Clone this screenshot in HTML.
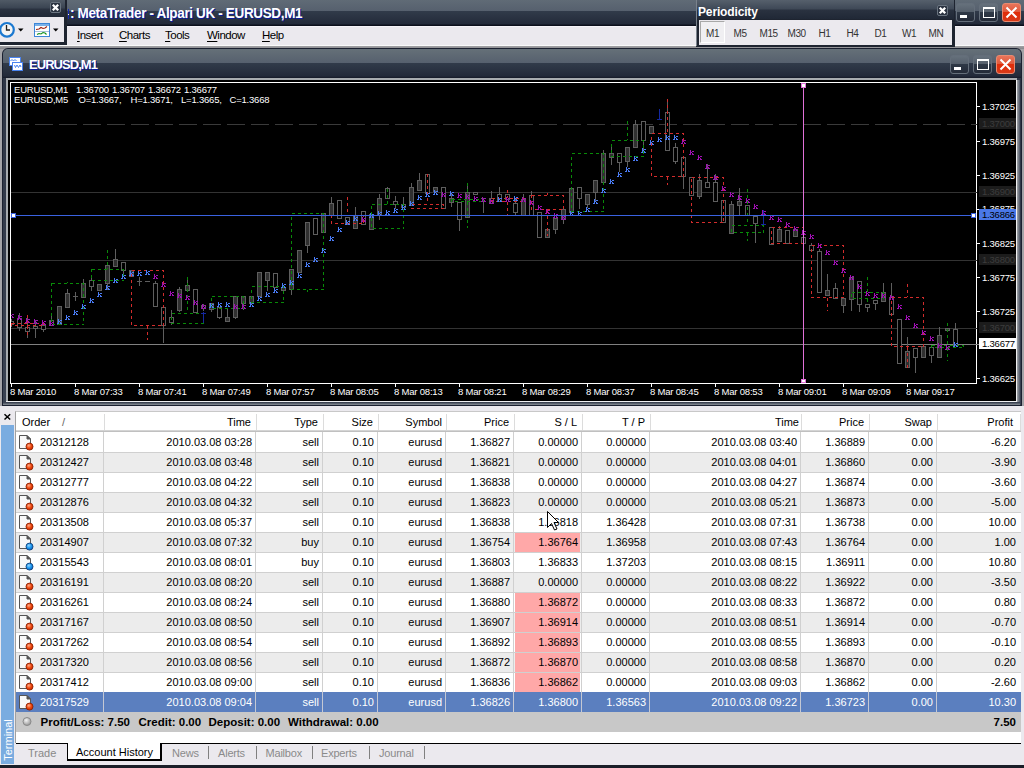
<!DOCTYPE html><html><head><meta charset="utf-8"><style>
*{margin:0;padding:0;box-sizing:border-box}
html,body{width:1024px;height:768px;overflow:hidden;background:#a4a4a8;font-family:"Liberation Sans",sans-serif;font-size:11px;color:#000;position:relative}
.a{position:absolute}
.t{position:absolute;white-space:nowrap;line-height:12px;height:12px}
.r{text-align:right}
.ttl{background:linear-gradient(#606b76 0,#56606e 11px,#313b4a 11px,#232a3a 24px,#0c101c 25px)}
.btn{position:absolute;border:1px solid #646e7a;border-radius:3px;background:linear-gradient(#66717c,#56606c 45%,#2e3846 50%,#242b38)}
.xbtn{position:absolute;border:1px solid #e88a70;border-radius:3px;background:linear-gradient(#e8745a,#e05a3c 45%,#e02c08 50%,#d83a18)}
.ch{position:absolute;font-size:9.5px;letter-spacing:-0.2px;color:#fff;white-space:nowrap;line-height:10px}
</style></head><body>

<div class="a ttl" style="left:0;top:0;width:1024px;height:26px"></div>
<div class="t" style="left:70px;top:5px;font-size:13.5px;letter-spacing:-0.35px;line-height:16px;height:16px;font-weight:bold;color:#fff;text-shadow:1px 1px 0 #0a1aa0;transform:scaleY(1.12);transform-origin:0 3px">: MetaTrader - Alpari UK - EURUSD,M1</div>
<div class="a" style="left:68px;top:9px;width:1px;height:10px;background:#1428b0"></div><div class="a" style="left:68px;top:14px;width:1px;height:1px;background:#fff"></div>
<div class="a" style="left:0;top:26px;width:1024px;height:20px;background:#ebe9ee;border-top:1px solid #f6f4f9;border-bottom:1px solid #fafafa"></div>
<div class="t" style="left:77px;top:29px;font-size:11.5px;letter-spacing:-0.5px;line-height:13px;height:13px"><u style="text-underline-offset:2px">I</u>nsert</div>
<div class="t" style="left:119px;top:29px;font-size:11.5px;letter-spacing:-0.5px;line-height:13px;height:13px"><u style="text-underline-offset:2px">C</u>harts</div>
<div class="t" style="left:165px;top:29px;font-size:11.5px;letter-spacing:-0.5px;line-height:13px;height:13px"><u style="text-underline-offset:2px">T</u>ools</div>
<div class="t" style="left:207px;top:29px;font-size:11.5px;letter-spacing:-0.5px;line-height:13px;height:13px"><u style="text-underline-offset:2px">W</u>indow</div>
<div class="t" style="left:262px;top:29px;font-size:11.5px;letter-spacing:-0.5px;line-height:13px;height:13px"><u style="text-underline-offset:2px">H</u>elp</div>
<div class="btn" style="left:956px;top:3px;width:19px;height:19px"></div>
<div class="btn" style="left:979px;top:3px;width:19px;height:19px"></div>
<div class="a" style="left:960px;top:15px;width:7px;height:3px;background:#fff"></div>
<div class="a" style="left:983px;top:7px;width:12px;height:11px;border:1px solid #fff;border-top-width:2px"></div>
<div class="xbtn" style="left:1002px;top:3px;width:19px;height:19px"></div>
<svg class="a" style="left:1002px;top:3px" width="19" height="19"><path d="M4.5 4.5L14.5 14.5M14.5 4.5L4.5 14.5" stroke="#fff" stroke-width="2"/></svg>
<div class="a" style="left:0;top:46px;width:1024px;height:3px;background:linear-gradient(#a2a2a6,#86868a)"></div>
<div class="a" style="left:0;top:0;width:67px;height:45px;background:#1e2430"></div>
<div class="a ttl" style="left:0;top:0;width:65px;height:17px;background:linear-gradient(#505a66,#3a4452 8px,#2a3240 9px,#202836)"></div>
<div class="a" style="left:0;top:17px;width:64px;height:25px;background:#ebe9ee"></div>
<div class="a" style="left:50px;top:2px;width:11px;height:11px;border:1px solid #6a7480;border-radius:2px;background:#2a3240"></div>
<svg class="a" style="left:50px;top:2px" width="11" height="11"><path d="M2.8 2.8L8.2 8.2M8.2 2.8L2.8 8.2" stroke="#fff" stroke-width="2.3"/></svg>
<svg class="a" style="left:0;top:17px" width="64" height="25"><circle cx="7" cy="12.8" r="6.8" fill="#f4f4f4" stroke="#1a78d0" stroke-width="2.2"/><path d="M6.5 8V13H10" fill="none" stroke="#222" stroke-width="1.3"/><path d="M18 11.5h5.5l-2.75 3z" fill="#000"/><rect x="34.5" y="6.5" width="15" height="13" fill="#fff" stroke="#3c86d8"/><rect x="35" y="7" width="14" height="2" fill="#7ab0e8"/><path d="M35 14.5H49" stroke="#a8c0d8"/><path d="M36 12.5l3-0.5 2-1.5 2 1 2-0.5 2-1.5" fill="none" stroke="#a02010" stroke-width="1.1"/><path d="M37 17.5l2-1 2 0.5 2-1.5 2 0.5 1.5 1.5" fill="none" stroke="#10901a" stroke-width="1.1"/><path d="M53 11.5h5.5l-2.75 3z" fill="#000"/></svg>
<div class="a" style="left:696px;top:0;width:259px;height:47px;background:#1e2430"></div>
<div class="a" style="left:697px;top:0;width:257px;height:19px;background:linear-gradient(#56606c,#3e4856 9px,#2a3240 10px,#202836)"></div>
<div class="a" style="left:696px;top:0;width:1px;height:46px;background:#7a828c"></div>
<div class="t" style="left:698px;top:5.5px;font-size:12px;letter-spacing:-0.15px;line-height:13px;height:13px;font-weight:bold;color:#fff">Periodicity</div>
<div class="a" style="left:937px;top:5px;width:11px;height:11px;border:1px solid #6a7480;border-radius:2px;background:#2a3240"></div>
<svg class="a" style="left:937px;top:5px" width="11" height="11"><path d="M2.8 2.8L8.2 8.2M8.2 2.8L2.8 8.2" stroke="#fff" stroke-width="2.3"/></svg>
<div class="a" style="left:699px;top:20px;width:253px;height:25px;background:#ebe9ee"></div>
<div class="a" style="left:700px;top:21px;width:25px;height:22px;background:#f0eff2;border:1px solid #a8a8a8;border-right-color:#fff;border-bottom-color:#fff"></div>
<div class="t" style="left:706px;top:28px;color:#333;font-size:10px;letter-spacing:-0.4px">M1</div>
<div class="t" style="left:733.5px;top:28px;color:#333;font-size:10px;letter-spacing:-0.4px">M5</div>
<div class="t" style="left:759.5px;top:28px;color:#333;font-size:10px;letter-spacing:-0.4px">M15</div>
<div class="t" style="left:787.5px;top:28px;color:#333;font-size:10px;letter-spacing:-0.4px">M30</div>
<div class="t" style="left:818.5px;top:28px;color:#333;font-size:10px;letter-spacing:-0.4px">H1</div>
<div class="t" style="left:846.5px;top:28px;color:#333;font-size:10px;letter-spacing:-0.4px">H4</div>
<div class="t" style="left:874.5px;top:28px;color:#333;font-size:10px;letter-spacing:-0.4px">D1</div>
<div class="t" style="left:902px;top:28px;color:#333;font-size:10px;letter-spacing:-0.4px">W1</div>
<div class="t" style="left:928.5px;top:28px;color:#333;font-size:10px;letter-spacing:-0.4px">MN</div>
<div class="a" style="left:2px;top:48px;width:1020px;height:358px;background:#1a2030;border-radius:6px 6px 0 0"></div>
<div class="a" style="left:3px;top:49px;width:1018px;height:356px;background:linear-gradient(#2c3444,#3a4252);border-radius:5px 5px 0 0"></div>
<div class="a ttl" style="left:3px;top:49px;width:1018px;height:29px;border-radius:5px 5px 0 0;background:linear-gradient(#657078 0,#56606e 14px,#313b4a 14px,#232a3a 27px,#151a28 29px)"></div>
<div class="a" style="left:6px;top:78px;width:1011px;height:2px;background:#a8acb0"></div>
<div class="a" style="left:6px;top:78px;width:2px;height:324px;background:#a8acb0"></div>
<div class="a" style="left:1016px;top:80px;width:1px;height:322px;background:#f0f0f2"></div>
<div class="a" style="left:6px;top:401px;width:1011px;height:1px;background:#f0f0f2"></div>
<div class="a" style="left:1017px;top:80px;width:3px;height:325px;background:linear-gradient(90deg,#a0a4a8,#505868)"></div>
<div class="a" style="left:3px;top:402px;width:1017px;height:3px;background:linear-gradient(#2a3242,#8a9098)"></div>
<div class="t" style="left:29px;top:57px;font-size:13px;letter-spacing:-0.95px;line-height:15px;height:15px;font-weight:bold;color:#fff;text-shadow:1px 1px 0 #0a1aa0">EURUSD,M1</div>
<div class="btn" style="left:950px;top:55px;width:19px;height:19px"></div>
<div class="btn" style="left:973px;top:55px;width:19px;height:19px"></div>
<div class="a" style="left:954px;top:67px;width:7px;height:3px;background:#fff"></div>
<div class="a" style="left:977px;top:59px;width:12px;height:11px;border:1px solid #fff;border-top-width:2px"></div>
<div class="xbtn" style="left:996px;top:55px;width:19px;height:19px"></div>
<svg class="a" style="left:996px;top:55px" width="19" height="19"><path d="M4.5 4.5L14.5 14.5M14.5 4.5L4.5 14.5" stroke="#fff" stroke-width="2"/></svg>
<svg class="a" style="left:8px;top:56px" width="16" height="16"><rect x="1.5" y="1.5" width="11" height="8" fill="#fff" stroke="#4a84f0"/><path d="M2.5 5l1.5-1.5 1.5 1.5 1.5-1.5 1.5 1.5" fill="none" stroke="#4a84f0"/><rect x="4.5" y="6.5" width="10" height="8" fill="#fff" stroke="#4a84f0"/><path d="M6.5 9l1 2.5 1.5-2.5 1.5 2.5 1.5-2.5 1 2" fill="none" stroke="#4a84f0"/></svg>
<div class="a" style="left:8px;top:80px;width:1008px;height:321px;background:#000"></div>
<div class="a" style="left:10px;top:82px;width:967px;height:302px;border:1px solid #fff"></div>
<div class="ch" style="left:14px;top:85px">EURUSD,M1</div>
<div class="ch" style="left:76px;top:85px">1.36700</div>
<div class="ch" style="left:112px;top:85px">1.36707</div>
<div class="ch" style="left:148px;top:85px">1.36672</div>
<div class="ch" style="left:184px;top:85px">1.36677</div>
<div class="ch" style="left:14px;top:95px">EURUSD,M5</div>
<div class="ch" style="left:78.5px;top:95px">O=1.3667,</div>
<div class="ch" style="left:130.5px;top:95px">H=1.3671,</div>
<div class="ch" style="left:181px;top:95px">L=1.3665,</div>
<div class="ch" style="left:229.5px;top:95px">C=1.3668</div>
<svg class="a" style="left:0;top:0" width="1024" height="410" shape-rendering="crispEdges">
<defs><g id="mk"><path d="M1 0h1v4h-1zM3 1h2v1h-2zM2 2h1v1h-1zM3 3h1v1h-1zM0 4h2v1h-2zM3 4h2v1h-2z"/></g><clipPath id="cc"><rect x="11" y="83" width="966" height="300"/></clipPath></defs><g clip-path="url(#cc)">
<path d="M11 124.5H977" stroke="#3a3a3a" stroke-dasharray="18 6"/>
<path d="M11 192.5H977" stroke="#333"/>
<path d="M11 260.5H977" stroke="#333"/>
<path d="M11 328.5H977" stroke="#333"/>
<path d="M11 344.5H977" stroke="#808080"/>
<path d="M11.5 319V321" stroke="#5e5e5e"/>
<path d="M11.5 325V327" stroke="#5e5e5e"/>
<rect x="9.5" y="321.5" width="4" height="3" fill="#000" stroke="#5e5e5e"/>
<path d="M19.5 313V318" stroke="#5e5e5e"/>
<path d="M19.5 328V331" stroke="#5e5e5e"/>
<rect x="17.5" y="318.5" width="4" height="9" fill="#000" stroke="#5e5e5e"/>
<path d="M27.5 315V327" stroke="#5e5e5e"/>
<path d="M27.5 332V338" stroke="#5e5e5e"/>
<rect x="25.5" y="327.5" width="4" height="4" fill="#000" stroke="#5e5e5e"/>
<path d="M35.5 320V326" stroke="#5e5e5e"/>
<path d="M35.5 329V338" stroke="#5e5e5e"/>
<rect x="33.5" y="326.5" width="4" height="2" fill="#000" stroke="#5e5e5e"/>
<path d="M43.5 323V325" stroke="#5e5e5e"/>
<path d="M43.5 330V332" stroke="#5e5e5e"/>
<rect x="41.5" y="325.5" width="4" height="4" fill="#000" stroke="#5e5e5e"/>
<path d="M51.5 314V320" stroke="#5e5e5e"/>
<rect x="49.5" y="320.5" width="4" height="5" fill="#000" stroke="#5e5e5e"/>
<rect x="57.5" y="306.5" width="4" height="18" fill="#303030" stroke="#5e5e5e"/>
<path d="M67.5 289V293" stroke="#5e5e5e"/>
<rect x="65.5" y="293.5" width="4" height="14" fill="#303030" stroke="#5e5e5e"/>
<path d="M75.5 292V296" stroke="#5e5e5e"/>
<path d="M75.5 297V301" stroke="#5e5e5e"/>
<path d="M73 296.5H78" stroke="#5e5e5e"/>
<path d="M83.5 279V283" stroke="#5e5e5e"/>
<rect x="81.5" y="283.5" width="4" height="14" fill="#303030" stroke="#5e5e5e"/>
<path d="M91.5 276V280" stroke="#5e5e5e"/>
<path d="M91.5 287V291" stroke="#5e5e5e"/>
<rect x="89.5" y="280.5" width="4" height="6" fill="#000" stroke="#5e5e5e"/>
<rect x="97.5" y="284.5" width="4" height="6" fill="#303030" stroke="#5e5e5e"/>
<path d="M107.5 284V290" stroke="#5e5e5e"/>
<rect x="105.5" y="265.5" width="4" height="18" fill="#303030" stroke="#5e5e5e"/>
<path d="M115.5 249V259" stroke="#5e5e5e"/>
<rect x="113.5" y="259.5" width="4" height="7" fill="#303030" stroke="#5e5e5e"/>
<path d="M123.5 271V275" stroke="#5e5e5e"/>
<rect x="121.5" y="262.5" width="4" height="8" fill="#000" stroke="#5e5e5e"/>
<rect x="129.5" y="270.5" width="4" height="6" fill="#303030" stroke="#5e5e5e"/>
<path d="M139.5 277V281" stroke="#5e5e5e"/>
<path d="M139.5 282V286" stroke="#5e5e5e"/>
<path d="M137 281.5H142" stroke="#5e5e5e"/>
<path d="M145 281.5H150" stroke="#5e5e5e"/>
<path d="M155.5 281V283" stroke="#5e5e5e"/>
<rect x="153.5" y="283.5" width="4" height="23" fill="#000" stroke="#5e5e5e"/>
<path d="M163.5 326V343" stroke="#5e5e5e"/>
<rect x="161.5" y="307.5" width="4" height="18" fill="#000" stroke="#5e5e5e"/>
<path d="M171.5 310V317" stroke="#5e5e5e"/>
<path d="M171.5 323V325" stroke="#5e5e5e"/>
<rect x="169.5" y="317.5" width="4" height="5" fill="#000" stroke="#5e5e5e"/>
<path d="M179.5 287V289" stroke="#5e5e5e"/>
<path d="M179.5 311V312" stroke="#5e5e5e"/>
<rect x="177.5" y="289.5" width="4" height="21" fill="#303030" stroke="#5e5e5e"/>
<path d="M187.5 277V285" stroke="#5e5e5e"/>
<rect x="185.5" y="285.5" width="4" height="5" fill="#303030" stroke="#5e5e5e"/>
<rect x="193.5" y="289.5" width="4" height="23" fill="#000" stroke="#5e5e5e"/>
<path d="M203.5 304V305" stroke="#5e5e5e"/>
<path d="M203.5 309V311" stroke="#5e5e5e"/>
<rect x="201.5" y="305.5" width="4" height="3" fill="#000" stroke="#5e5e5e"/>
<path d="M211.5 310V312" stroke="#5e5e5e"/>
<rect x="209.5" y="303.5" width="4" height="6" fill="#303030" stroke="#5e5e5e"/>
<path d="M219.5 318V319" stroke="#5e5e5e"/>
<rect x="217.5" y="307.5" width="4" height="10" fill="#000" stroke="#5e5e5e"/>
<path d="M227.5 309V317" stroke="#5e5e5e"/>
<rect x="225.5" y="317.5" width="4" height="4" fill="#303030" stroke="#5e5e5e"/>
<path d="M235.5 318V319" stroke="#5e5e5e"/>
<rect x="233.5" y="296.5" width="4" height="21" fill="#303030" stroke="#5e5e5e"/>
<path d="M243.5 304V310" stroke="#5e5e5e"/>
<rect x="241.5" y="296.5" width="4" height="7" fill="#303030" stroke="#5e5e5e"/>
<rect x="249.5" y="296.5" width="4" height="7" fill="#303030" stroke="#5e5e5e"/>
<rect x="257.5" y="272.5" width="4" height="24" fill="#303030" stroke="#5e5e5e"/>
<path d="M267.5 281V291" stroke="#5e5e5e"/>
<rect x="265.5" y="272.5" width="4" height="8" fill="#303030" stroke="#5e5e5e"/>
<rect x="273.5" y="273.5" width="4" height="14" fill="#000" stroke="#5e5e5e"/>
<rect x="281.5" y="287.5" width="4" height="3" fill="#303030" stroke="#5e5e5e"/>
<path d="M291.5 290V295" stroke="#5e5e5e"/>
<rect x="289.5" y="269.5" width="4" height="20" fill="#303030" stroke="#5e5e5e"/>
<rect x="297.5" y="250.5" width="4" height="22" fill="#303030" stroke="#5e5e5e"/>
<path d="M307.5 246V253" stroke="#5e5e5e"/>
<rect x="305.5" y="222.5" width="4" height="23" fill="#303030" stroke="#5e5e5e"/>
<rect x="313.5" y="218.5" width="4" height="16" fill="#000" stroke="#5e5e5e"/>
<rect x="321.5" y="213.5" width="4" height="19" fill="#303030" stroke="#5e5e5e"/>
<path d="M331.5 197V203" stroke="#5e5e5e"/>
<rect x="329.5" y="203.5" width="4" height="12" fill="#303030" stroke="#5e5e5e"/>
<rect x="337.5" y="200.5" width="4" height="18" fill="#000" stroke="#5e5e5e"/>
<rect x="345.5" y="217.5" width="4" height="7" fill="#000" stroke="#5e5e5e"/>
<path d="M355.5 207V215" stroke="#5e5e5e"/>
<rect x="353.5" y="215.5" width="4" height="13" fill="#303030" stroke="#5e5e5e"/>
<rect x="361.5" y="211.5" width="4" height="13" fill="#000" stroke="#5e5e5e"/>
<rect x="369.5" y="214.5" width="4" height="15" fill="#303030" stroke="#5e5e5e"/>
<path d="M379.5 194V198" stroke="#5e5e5e"/>
<path d="M379.5 216V220" stroke="#5e5e5e"/>
<rect x="377.5" y="198.5" width="4" height="17" fill="#303030" stroke="#5e5e5e"/>
<path d="M387.5 187V188" stroke="#5e5e5e"/>
<rect x="385.5" y="188.5" width="4" height="10" fill="#000" stroke="#5e5e5e"/>
<path d="M395.5 196V201" stroke="#5e5e5e"/>
<path d="M395.5 205V209" stroke="#5e5e5e"/>
<rect x="393.5" y="201.5" width="4" height="3" fill="#000" stroke="#5e5e5e"/>
<path d="M403.5 197V204" stroke="#5e5e5e"/>
<rect x="401.5" y="204.5" width="4" height="3" fill="#000" stroke="#5e5e5e"/>
<path d="M411.5 183V187" stroke="#5e5e5e"/>
<rect x="409.5" y="187.5" width="4" height="18" fill="#303030" stroke="#5e5e5e"/>
<path d="M419.5 173V180" stroke="#5e5e5e"/>
<rect x="417.5" y="180.5" width="4" height="10" fill="#303030" stroke="#5e5e5e"/>
<rect x="425.5" y="174.5" width="4" height="19" fill="#000" stroke="#5e5e5e"/>
<rect x="433.5" y="187.5" width="4" height="4" fill="#303030" stroke="#5e5e5e"/>
<rect x="441.5" y="187.5" width="4" height="21" fill="#000" stroke="#5e5e5e"/>
<path d="M451.5 193V198" stroke="#5e5e5e"/>
<path d="M451.5 203V207" stroke="#5e5e5e"/>
<rect x="449.5" y="198.5" width="4" height="4" fill="#303030" stroke="#5e5e5e"/>
<path d="M459.5 220V231" stroke="#5e5e5e"/>
<rect x="457.5" y="202.5" width="4" height="17" fill="#000" stroke="#5e5e5e"/>
<path d="M467.5 183V192" stroke="#5e5e5e"/>
<rect x="465.5" y="192.5" width="4" height="25" fill="#303030" stroke="#5e5e5e"/>
<rect x="473.5" y="192.5" width="4" height="2" fill="#000" stroke="#5e5e5e"/>
<path d="M483.5 200V213" stroke="#5e5e5e"/>
<path d="M481 198.5H486" stroke="#5e5e5e"/>
<path d="M491.5 191V198" stroke="#5e5e5e"/>
<rect x="489.5" y="198.5" width="4" height="5" fill="#000" stroke="#5e5e5e"/>
<path d="M499.5 187V194" stroke="#5e5e5e"/>
<rect x="497.5" y="194.5" width="4" height="7" fill="#000" stroke="#5e5e5e"/>
<rect x="505.5" y="194.5" width="4" height="5" fill="#000" stroke="#5e5e5e"/>
<path d="M515.5 199V203" stroke="#5e5e5e"/>
<path d="M515.5 213V216" stroke="#5e5e5e"/>
<rect x="513.5" y="203.5" width="4" height="9" fill="#000" stroke="#5e5e5e"/>
<path d="M523.5 194V199" stroke="#5e5e5e"/>
<rect x="521.5" y="199.5" width="4" height="16" fill="#303030" stroke="#5e5e5e"/>
<path d="M531.5 191V195" stroke="#5e5e5e"/>
<rect x="529.5" y="195.5" width="4" height="20" fill="#000" stroke="#5e5e5e"/>
<rect x="537.5" y="212.5" width="4" height="25" fill="#000" stroke="#5e5e5e"/>
<rect x="545.5" y="229.5" width="4" height="8" fill="#303030" stroke="#5e5e5e"/>
<path d="M555.5 230V234" stroke="#5e5e5e"/>
<rect x="553.5" y="218.5" width="4" height="11" fill="#303030" stroke="#5e5e5e"/>
<path d="M563.5 220V224" stroke="#5e5e5e"/>
<rect x="561.5" y="209.5" width="4" height="10" fill="#303030" stroke="#5e5e5e"/>
<rect x="569.5" y="188.5" width="4" height="24" fill="#303030" stroke="#5e5e5e"/>
<path d="M579.5 199V209" stroke="#5e5e5e"/>
<rect x="577.5" y="187.5" width="4" height="11" fill="#000" stroke="#5e5e5e"/>
<path d="M587.5 205V208" stroke="#5e5e5e"/>
<rect x="585.5" y="194.5" width="4" height="10" fill="#303030" stroke="#5e5e5e"/>
<path d="M595.5 193V201" stroke="#5e5e5e"/>
<rect x="593.5" y="180.5" width="4" height="12" fill="#303030" stroke="#5e5e5e"/>
<path d="M603.5 150V153" stroke="#5e5e5e"/>
<rect x="601.5" y="153.5" width="4" height="29" fill="#303030" stroke="#5e5e5e"/>
<path d="M611.5 144V153" stroke="#5e5e5e"/>
<path d="M611.5 158V165" stroke="#5e5e5e"/>
<rect x="609.5" y="153.5" width="4" height="4" fill="#303030" stroke="#5e5e5e"/>
<path d="M619.5 163V172" stroke="#5e5e5e"/>
<rect x="617.5" y="153.5" width="4" height="9" fill="#000" stroke="#5e5e5e"/>
<path d="M627.5 162V167" stroke="#5e5e5e"/>
<rect x="625.5" y="147.5" width="4" height="14" fill="#303030" stroke="#5e5e5e"/>
<path d="M635.5 120V124" stroke="#5e5e5e"/>
<rect x="633.5" y="124.5" width="4" height="23" fill="#303030" stroke="#5e5e5e"/>
<path d="M643.5 141V153" stroke="#5e5e5e"/>
<rect x="641.5" y="121.5" width="4" height="19" fill="#000" stroke="#5e5e5e"/>
<rect x="649.5" y="126.5" width="4" height="7" fill="#303030" stroke="#5e5e5e"/>
<path d="M667.5 99V112" stroke="#5e5e5e"/>
<rect x="665.5" y="112.5" width="4" height="38" fill="#000" stroke="#5e5e5e"/>
<path d="M675.5 143V147" stroke="#5e5e5e"/>
<path d="M675.5 162V164" stroke="#5e5e5e"/>
<rect x="673.5" y="147.5" width="4" height="14" fill="#000" stroke="#5e5e5e"/>
<path d="M683.5 177V189" stroke="#5e5e5e"/>
<rect x="681.5" y="157.5" width="4" height="19" fill="#000" stroke="#5e5e5e"/>
<rect x="689.5" y="177.5" width="4" height="18" fill="#000" stroke="#5e5e5e"/>
<path d="M699.5 174V180" stroke="#5e5e5e"/>
<path d="M699.5 197V199" stroke="#5e5e5e"/>
<rect x="697.5" y="180.5" width="4" height="16" fill="#303030" stroke="#5e5e5e"/>
<path d="M707.5 164V182" stroke="#5e5e5e"/>
<rect x="705.5" y="182.5" width="4" height="5" fill="#000" stroke="#5e5e5e"/>
<path d="M715.5 174V182" stroke="#5e5e5e"/>
<rect x="713.5" y="182.5" width="4" height="19" fill="#000" stroke="#5e5e5e"/>
<rect x="721.5" y="200.5" width="4" height="22" fill="#000" stroke="#5e5e5e"/>
<path d="M731.5 201V204" stroke="#5e5e5e"/>
<rect x="729.5" y="204.5" width="4" height="29" fill="#303030" stroke="#5e5e5e"/>
<path d="M739.5 188V201" stroke="#5e5e5e"/>
<path d="M739.5 206V216" stroke="#5e5e5e"/>
<rect x="737.5" y="201.5" width="4" height="4" fill="#303030" stroke="#5e5e5e"/>
<rect x="745.5" y="205.5" width="4" height="10" fill="#000" stroke="#5e5e5e"/>
<path d="M755.5 224V243" stroke="#5e5e5e"/>
<rect x="753.5" y="216.5" width="4" height="7" fill="#000" stroke="#5e5e5e"/>
<rect x="769.5" y="227.5" width="4" height="17" fill="#000" stroke="#5e5e5e"/>
<path d="M779.5 226V229" stroke="#5e5e5e"/>
<rect x="777.5" y="229.5" width="4" height="12" fill="#303030" stroke="#5e5e5e"/>
<rect x="785.5" y="230.5" width="4" height="13" fill="#000" stroke="#5e5e5e"/>
<rect x="793.5" y="229.5" width="4" height="7" fill="#303030" stroke="#5e5e5e"/>
<rect x="801.5" y="237.5" width="4" height="6" fill="#000" stroke="#5e5e5e"/>
<path d="M811.5 243V245" stroke="#5e5e5e"/>
<rect x="809.5" y="245.5" width="4" height="5" fill="#000" stroke="#5e5e5e"/>
<path d="M819.5 249V251" stroke="#5e5e5e"/>
<rect x="817.5" y="251.5" width="4" height="41" fill="#000" stroke="#5e5e5e"/>
<path d="M827.5 274V290" stroke="#5e5e5e"/>
<rect x="825.5" y="290.5" width="4" height="5" fill="#303030" stroke="#5e5e5e"/>
<path d="M835.5 283V288" stroke="#5e5e5e"/>
<rect x="833.5" y="288.5" width="4" height="10" fill="#000" stroke="#5e5e5e"/>
<path d="M843.5 306V313" stroke="#5e5e5e"/>
<rect x="841.5" y="298.5" width="4" height="7" fill="#303030" stroke="#5e5e5e"/>
<path d="M851.5 300V311" stroke="#5e5e5e"/>
<rect x="849.5" y="277.5" width="4" height="22" fill="#303030" stroke="#5e5e5e"/>
<path d="M859.5 305V312" stroke="#5e5e5e"/>
<rect x="857.5" y="281.5" width="4" height="23" fill="#000" stroke="#5e5e5e"/>
<path d="M867.5 308V312" stroke="#5e5e5e"/>
<rect x="865.5" y="304.5" width="4" height="3" fill="#000" stroke="#5e5e5e"/>
<path d="M875.5 304V310" stroke="#5e5e5e"/>
<rect x="873.5" y="300.5" width="4" height="3" fill="#000" stroke="#5e5e5e"/>
<path d="M883.5 283V292" stroke="#5e5e5e"/>
<rect x="881.5" y="292.5" width="4" height="9" fill="#303030" stroke="#5e5e5e"/>
<path d="M891.5 283V297" stroke="#5e5e5e"/>
<rect x="889.5" y="297.5" width="4" height="17" fill="#000" stroke="#5e5e5e"/>
<rect x="897.5" y="319.5" width="4" height="44" fill="#000" stroke="#5e5e5e"/>
<path d="M907.5 337V351" stroke="#5e5e5e"/>
<rect x="905.5" y="351.5" width="4" height="16" fill="#303030" stroke="#5e5e5e"/>
<path d="M915.5 358V373" stroke="#5e5e5e"/>
<rect x="913.5" y="348.5" width="4" height="9" fill="#000" stroke="#5e5e5e"/>
<rect x="921.5" y="346.5" width="4" height="11" fill="#303030" stroke="#5e5e5e"/>
<path d="M931.5 356V363" stroke="#5e5e5e"/>
<rect x="929.5" y="347.5" width="4" height="8" fill="#000" stroke="#5e5e5e"/>
<path d="M939.5 327V335" stroke="#5e5e5e"/>
<rect x="937.5" y="335.5" width="4" height="22" fill="#303030" stroke="#5e5e5e"/>
<rect x="945.5" y="328.5" width="4" height="2" fill="#303030" stroke="#5e5e5e"/>
<path d="M955.5 323V329" stroke="#5e5e5e"/>
<rect x="953.5" y="329.5" width="4" height="16" fill="#000" stroke="#5e5e5e"/>
<rect x="11.5" y="323.5" width="32" height="2" fill="none" stroke="#d22c2c" stroke-dasharray="3 3"/>
<path d="M27.5 315V323" stroke="#d22c2c" stroke-dasharray="3 3"/>
<path d="M27.5 326V337" stroke="#d22c2c" stroke-dasharray="3 3"/>
<rect x="51.5" y="283.5" width="32" height="41" fill="none" stroke="#088a08" stroke-dasharray="3 3"/>
<path d="M67.5 282V283" stroke="#088a08" stroke-dasharray="3 3"/>
<rect x="91.5" y="269.5" width="32" height="11" fill="none" stroke="#088a08" stroke-dasharray="3 3"/>
<path d="M107.5 250V269" stroke="#088a08" stroke-dasharray="3 3"/>
<rect x="131.5" y="270.5" width="32" height="55" fill="none" stroke="#d22c2c" stroke-dasharray="3 3"/>
<path d="M147.5 326V340" stroke="#d22c2c" stroke-dasharray="3 3"/>
<rect x="171.5" y="313.5" width="32" height="10" fill="none" stroke="#088a08" stroke-dasharray="3 3"/>
<path d="M187.5 277V313" stroke="#088a08" stroke-dasharray="3 3"/>
<rect x="211.5" y="296.5" width="32" height="12" fill="none" stroke="#088a08" stroke-dasharray="3 3"/>
<rect x="251.5" y="286.5" width="32" height="16" fill="none" stroke="#088a08" stroke-dasharray="3 3"/>
<rect x="291.5" y="213.5" width="32" height="76" fill="none" stroke="#088a08" stroke-dasharray="3 3"/>
<path d="M307.5 290V292" stroke="#088a08" stroke-dasharray="3 3"/>
<rect x="331.5" y="215.5" width="32" height="8" fill="none" stroke="#d22c2c" stroke-dasharray="3 3"/>
<path d="M347.5 197V215" stroke="#d22c2c" stroke-dasharray="3 3"/>
<rect x="371.5" y="204.5" width="32" height="24" fill="none" stroke="#088a08" stroke-dasharray="3 3"/>
<path d="M387.5 189V204" stroke="#088a08" stroke-dasharray="3 3"/>
<rect x="411.5" y="204.5" width="32" height="4" fill="none" stroke="#d22c2c" stroke-dasharray="3 3"/>
<path d="M427.5 174V204" stroke="#d22c2c" stroke-dasharray="3 3"/>
<rect x="451.5" y="199.5" width="32" height="2" fill="none" stroke="#088a08" stroke-dasharray="3 3"/>
<path d="M467.5 183V199" stroke="#088a08" stroke-dasharray="3 3"/>
<path d="M467.5 202V228" stroke="#088a08" stroke-dasharray="3 3"/>
<rect x="491.5" y="198.5" width="32" height="3" fill="none" stroke="#d22c2c" stroke-dasharray="3 3"/>
<path d="M507.5 190V198" stroke="#d22c2c" stroke-dasharray="3 3"/>
<path d="M507.5 202V215" stroke="#d22c2c" stroke-dasharray="3 3"/>
<rect x="531.5" y="195.5" width="32" height="14" fill="none" stroke="#d22c2c" stroke-dasharray="3 3"/>
<path d="M547.5 193V195" stroke="#d22c2c" stroke-dasharray="3 3"/>
<path d="M547.5 210V236" stroke="#d22c2c" stroke-dasharray="3 3"/>
<rect x="571.5" y="153.5" width="32" height="58" fill="none" stroke="#088a08" stroke-dasharray="3 3"/>
<rect x="611.5" y="140.5" width="32" height="16" fill="none" stroke="#088a08" stroke-dasharray="3 3"/>
<path d="M627.5 121V140" stroke="#088a08" stroke-dasharray="3 3"/>
<rect x="651.5" y="133.5" width="32" height="43" fill="none" stroke="#d22c2c" stroke-dasharray="3 3"/>
<path d="M667.5 99V133" stroke="#d22c2c" stroke-dasharray="3 3"/>
<path d="M667.5 177V185" stroke="#d22c2c" stroke-dasharray="3 3"/>
<rect x="691.5" y="177.5" width="32" height="45" fill="none" stroke="#d22c2c" stroke-dasharray="3 3"/>
<rect x="731.5" y="225.5" width="32" height="7" fill="none" stroke="#088a08" stroke-dasharray="3 3"/>
<path d="M747.5 189V225" stroke="#088a08" stroke-dasharray="3 3"/>
<path d="M747.5 233V241" stroke="#088a08" stroke-dasharray="3 3"/>
<rect x="771.5" y="227.5" width="32" height="16" fill="none" stroke="#d22c2c" stroke-dasharray="3 3"/>
<rect x="811.5" y="245.5" width="32" height="52" fill="none" stroke="#d22c2c" stroke-dasharray="3 3"/>
<path d="M827.5 298V311" stroke="#d22c2c" stroke-dasharray="3 3"/>
<rect x="851.5" y="292.5" width="32" height="6" fill="none" stroke="#088a08" stroke-dasharray="3 3"/>
<path d="M867.5 277V292" stroke="#088a08" stroke-dasharray="3 3"/>
<path d="M867.5 299V304" stroke="#088a08" stroke-dasharray="3 3"/>
<rect x="891.5" y="297.5" width="32" height="49" fill="none" stroke="#d22c2c" stroke-dasharray="3 3"/>
<path d="M907.5 284V297" stroke="#d22c2c" stroke-dasharray="3 3"/>
<path d="M907.5 347V371" stroke="#d22c2c" stroke-dasharray="3 3"/>
<rect x="931.5" y="345.5" width="32" height="2" fill="none" stroke="#088a08" stroke-dasharray="3 3"/>
<path d="M947.5 323V345" stroke="#088a08" stroke-dasharray="3 3"/>
<path d="M947.5 348V361" stroke="#088a08" stroke-dasharray="3 3"/>
<use href="#mk" x="9" y="313" fill="#a010b4"/>
<use href="#mk" x="17" y="315" fill="#a010b4"/>
<use href="#mk" x="25" y="318" fill="#a010b4"/>
<use href="#mk" x="33" y="319" fill="#a010b4"/>
<use href="#mk" x="41" y="320" fill="#a010b4"/>
<use href="#mk" x="49" y="321" fill="#a010b4"/>
<use href="#mk" x="57" y="319" fill="#4a7cf6"/>
<use href="#mk" x="65" y="315" fill="#4a7cf6"/>
<use href="#mk" x="73" y="310" fill="#4a7cf6"/>
<use href="#mk" x="81" y="304" fill="#4a7cf6"/>
<use href="#mk" x="89" y="298" fill="#4a7cf6"/>
<use href="#mk" x="97" y="292" fill="#4a7cf6"/>
<use href="#mk" x="105" y="285" fill="#4a7cf6"/>
<use href="#mk" x="113" y="278" fill="#4a7cf6"/>
<use href="#mk" x="121" y="274" fill="#4a7cf6"/>
<use href="#mk" x="129" y="271" fill="#4a7cf6"/>
<use href="#mk" x="137" y="271" fill="#4a7cf6"/>
<use href="#mk" x="145" y="270" fill="#4a7cf6"/>
<use href="#mk" x="153" y="274" fill="#a010b4"/>
<use href="#mk" x="161" y="282" fill="#a010b4"/>
<use href="#mk" x="169" y="291" fill="#a010b4"/>
<use href="#mk" x="177" y="293" fill="#a010b4"/>
<use href="#mk" x="185" y="295" fill="#a010b4"/>
<use href="#mk" x="193" y="300" fill="#a010b4"/>
<use href="#mk" x="201" y="304" fill="#a010b4"/>
<use href="#mk" x="209" y="303" fill="#4a7cf6"/>
<use href="#mk" x="217" y="302" fill="#4a7cf6"/>
<use href="#mk" x="225" y="302" fill="#4a7cf6"/>
<use href="#mk" x="233" y="304" fill="#a010b4"/>
<use href="#mk" x="241" y="304" fill="#a010b4"/>
<use href="#mk" x="249" y="302" fill="#4a7cf6"/>
<use href="#mk" x="257" y="296" fill="#4a7cf6"/>
<use href="#mk" x="265" y="292" fill="#4a7cf6"/>
<use href="#mk" x="273" y="288" fill="#4a7cf6"/>
<use href="#mk" x="281" y="283" fill="#4a7cf6"/>
<use href="#mk" x="289" y="280" fill="#4a7cf6"/>
<use href="#mk" x="297" y="273" fill="#4a7cf6"/>
<use href="#mk" x="305" y="262" fill="#4a7cf6"/>
<use href="#mk" x="313" y="257" fill="#4a7cf6"/>
<use href="#mk" x="321" y="248" fill="#4a7cf6"/>
<use href="#mk" x="329" y="236" fill="#4a7cf6"/>
<use href="#mk" x="337" y="227" fill="#4a7cf6"/>
<use href="#mk" x="345" y="220" fill="#4a7cf6"/>
<use href="#mk" x="353" y="216" fill="#4a7cf6"/>
<use href="#mk" x="361" y="217" fill="#a010b4"/>
<use href="#mk" x="369" y="213" fill="#4a7cf6"/>
<use href="#mk" x="377" y="211" fill="#4a7cf6"/>
<use href="#mk" x="385" y="210" fill="#4a7cf6"/>
<use href="#mk" x="393" y="208" fill="#4a7cf6"/>
<use href="#mk" x="401" y="205" fill="#4a7cf6"/>
<use href="#mk" x="409" y="201" fill="#4a7cf6"/>
<use href="#mk" x="417" y="195" fill="#4a7cf6"/>
<use href="#mk" x="425" y="192" fill="#4a7cf6"/>
<use href="#mk" x="433" y="190" fill="#4a7cf6"/>
<use href="#mk" x="441" y="192" fill="#a010b4"/>
<use href="#mk" x="449" y="191" fill="#4a7cf6"/>
<use href="#mk" x="457" y="193" fill="#a010b4"/>
<use href="#mk" x="465" y="194" fill="#a010b4"/>
<use href="#mk" x="473" y="196" fill="#a010b4"/>
<use href="#mk" x="481" y="197" fill="#a010b4"/>
<use href="#mk" x="489" y="199" fill="#a010b4"/>
<use href="#mk" x="497" y="197" fill="#4a7cf6"/>
<use href="#mk" x="505" y="197" fill="#a010b4"/>
<use href="#mk" x="513" y="196" fill="#4a7cf6"/>
<use href="#mk" x="521" y="197" fill="#a010b4"/>
<use href="#mk" x="529" y="200" fill="#a010b4"/>
<use href="#mk" x="537" y="205" fill="#a010b4"/>
<use href="#mk" x="545" y="209" fill="#a010b4"/>
<use href="#mk" x="553" y="213" fill="#a010b4"/>
<use href="#mk" x="561" y="215" fill="#a010b4"/>
<use href="#mk" x="569" y="211" fill="#4a7cf6"/>
<use href="#mk" x="577" y="211" fill="#4a7cf6"/>
<use href="#mk" x="585" y="207" fill="#4a7cf6"/>
<use href="#mk" x="593" y="199" fill="#4a7cf6"/>
<use href="#mk" x="601" y="188" fill="#4a7cf6"/>
<use href="#mk" x="609" y="179" fill="#4a7cf6"/>
<use href="#mk" x="617" y="172" fill="#4a7cf6"/>
<use href="#mk" x="625" y="167" fill="#4a7cf6"/>
<use href="#mk" x="633" y="156" fill="#4a7cf6"/>
<use href="#mk" x="641" y="148" fill="#4a7cf6"/>
<use href="#mk" x="649" y="140" fill="#4a7cf6"/>
<use href="#mk" x="657" y="137" fill="#4a7cf6"/>
<use href="#mk" x="665" y="135" fill="#4a7cf6"/>
<use href="#mk" x="673" y="135" fill="#4a7cf6"/>
<use href="#mk" x="681" y="139" fill="#a010b4"/>
<use href="#mk" x="689" y="150" fill="#a010b4"/>
<use href="#mk" x="697" y="155" fill="#a010b4"/>
<use href="#mk" x="705" y="164" fill="#a010b4"/>
<use href="#mk" x="713" y="175" fill="#a010b4"/>
<use href="#mk" x="721" y="186" fill="#a010b4"/>
<use href="#mk" x="729" y="192" fill="#a010b4"/>
<use href="#mk" x="737" y="195" fill="#a010b4"/>
<use href="#mk" x="745" y="198" fill="#a010b4"/>
<use href="#mk" x="753" y="204" fill="#a010b4"/>
<use href="#mk" x="761" y="210" fill="#a010b4"/>
<use href="#mk" x="769" y="215" fill="#a010b4"/>
<use href="#mk" x="777" y="217" fill="#a010b4"/>
<use href="#mk" x="785" y="222" fill="#a010b4"/>
<use href="#mk" x="793" y="226" fill="#a010b4"/>
<use href="#mk" x="801" y="230" fill="#a010b4"/>
<use href="#mk" x="809" y="234" fill="#a010b4"/>
<use href="#mk" x="817" y="243" fill="#a010b4"/>
<use href="#mk" x="825" y="250" fill="#a010b4"/>
<use href="#mk" x="833" y="260" fill="#a010b4"/>
<use href="#mk" x="841" y="268" fill="#a010b4"/>
<use href="#mk" x="849" y="275" fill="#a010b4"/>
<use href="#mk" x="857" y="284" fill="#a010b4"/>
<use href="#mk" x="865" y="291" fill="#a010b4"/>
<use href="#mk" x="873" y="293" fill="#a010b4"/>
<use href="#mk" x="881" y="293" fill="#a010b4"/>
<use href="#mk" x="889" y="295" fill="#a010b4"/>
<use href="#mk" x="897" y="304" fill="#a010b4"/>
<use href="#mk" x="905" y="315" fill="#a010b4"/>
<use href="#mk" x="913" y="323" fill="#a010b4"/>
<use href="#mk" x="921" y="330" fill="#a010b4"/>
<use href="#mk" x="929" y="336" fill="#a010b4"/>
<use href="#mk" x="937" y="343" fill="#a010b4"/>
<use href="#mk" x="945" y="345" fill="#a010b4"/>
<use href="#mk" x="953" y="342" fill="#4a7cf6"/>
<path d="M659.5 109V120M657 119.5H662" stroke="#1428a0"/>
<path d="M763.5 210V225M761 224.5H766" stroke="#1428a0"/>
<path d="M203.5 312V323M201 313.5H206" stroke="#1428a0"/>
</g>
<path d="M977 344.5H979" stroke="#808080"/>
<path d="M11 215.5H976" stroke="#3a62e0"/>
<rect x="11.5" y="213.5" width="4" height="4" fill="#fff" stroke="#3a62e0"/>
<rect x="971.5" y="213.5" width="4" height="4" fill="#fff" stroke="#3a62e0"/>
<path d="M803.5 83V383" stroke="#e070d8"/>
<rect x="801.5" y="83.5" width="4" height="4" fill="#fff" stroke="#e070d8"/>
<rect x="801.5" y="379.5" width="4" height="3" fill="#fff" stroke="#e070d8"/>
<path d="M977 106.5H980" stroke="#fff"/>
<path d="M977 141.5H980" stroke="#fff"/>
<path d="M977 175.5H980" stroke="#fff"/>
<path d="M977 209.5H980" stroke="#fff"/>
<path d="M977 243.5H980" stroke="#fff"/>
<path d="M977 277.5H980" stroke="#fff"/>
<path d="M977 311.5H980" stroke="#fff"/>
<path d="M977 378.5H980" stroke="#fff"/>
<path d="M11.5 383V387" stroke="#fff"/>
<path d="M75.5 383V387" stroke="#fff"/>
<path d="M139.5 383V387" stroke="#fff"/>
<path d="M203.5 383V387" stroke="#fff"/>
<path d="M267.5 383V387" stroke="#fff"/>
<path d="M331.5 383V387" stroke="#fff"/>
<path d="M395.5 383V387" stroke="#fff"/>
<path d="M459.5 383V387" stroke="#fff"/>
<path d="M523.5 383V387" stroke="#fff"/>
<path d="M587.5 383V387" stroke="#fff"/>
<path d="M651.5 383V387" stroke="#fff"/>
<path d="M715.5 383V387" stroke="#fff"/>
<path d="M779.5 383V387" stroke="#fff"/>
<path d="M843.5 383V387" stroke="#fff"/>
<path d="M907.5 383V387" stroke="#fff"/>
<rect x="979" y="118" width="37" height="11" fill="#1c1c1c"/>
<rect x="979" y="186" width="37" height="11" fill="#1c1c1c"/>
<rect x="979" y="254" width="37" height="11" fill="#1c1c1c"/>
<rect x="979" y="322" width="37" height="11" fill="#1c1c1c"/>
<rect x="979" y="209" width="37" height="11" fill="#4a78e8"/>
<rect x="979" y="338" width="37" height="11" fill="#fff"/>
</svg>
<div class="ch" style="left:982px;top:204px;height:5px;overflow:hidden">1.36875</div>
<div class="ch" style="left:982px;top:102px;color:#fff">1.37025</div>
<div class="ch" style="left:982px;top:119px;color:#3c3c3c">1.37000</div>
<div class="ch" style="left:982px;top:137px;color:#fff">1.36975</div>
<div class="ch" style="left:982px;top:171px;color:#fff">1.36925</div>
<div class="ch" style="left:982px;top:187px;color:#3c3c3c">1.36900</div>
<div class="ch" style="left:982px;top:210px;color:#000">1.36866</div>
<div class="ch" style="left:982px;top:239px;color:#fff">1.36825</div>
<div class="ch" style="left:982px;top:255px;color:#3c3c3c">1.36800</div>
<div class="ch" style="left:982px;top:273px;color:#fff">1.36775</div>
<div class="ch" style="left:982px;top:307px;color:#fff">1.36725</div>
<div class="ch" style="left:982px;top:323px;color:#3c3c3c">1.36700</div>
<div class="ch" style="left:982px;top:339px;color:#000">1.36677</div>
<div class="ch" style="left:982px;top:374px;color:#fff">1.36625</div>
<div class="ch" style="left:10px;top:387px">8 Mar 2010</div>
<div class="ch" style="left:74px;top:387px">8 Mar 07:33</div>
<div class="ch" style="left:138px;top:387px">8 Mar 07:41</div>
<div class="ch" style="left:202px;top:387px">8 Mar 07:49</div>
<div class="ch" style="left:266px;top:387px">8 Mar 07:57</div>
<div class="ch" style="left:330px;top:387px">8 Mar 08:05</div>
<div class="ch" style="left:394px;top:387px">8 Mar 08:13</div>
<div class="ch" style="left:458px;top:387px">8 Mar 08:21</div>
<div class="ch" style="left:522px;top:387px">8 Mar 08:29</div>
<div class="ch" style="left:586px;top:387px">8 Mar 08:37</div>
<div class="ch" style="left:650px;top:387px">8 Mar 08:45</div>
<div class="ch" style="left:714px;top:387px">8 Mar 08:53</div>
<div class="ch" style="left:778px;top:387px">8 Mar 09:01</div>
<div class="ch" style="left:842px;top:387px">8 Mar 09:09</div>
<div class="ch" style="left:906px;top:387px">8 Mar 09:17</div>
<svg width="0" height="0" style="position:absolute"><defs><radialGradient id="gb" cx="0.4" cy="0.35" r="0.7"><stop offset="0" stop-color="#9ad8ff"/><stop offset="0.5" stop-color="#1e9af0"/><stop offset="1" stop-color="#0a60c0"/></radialGradient><radialGradient id="gr" cx="0.4" cy="0.35" r="0.7"><stop offset="0" stop-color="#ffb090"/><stop offset="0.5" stop-color="#f04a10"/><stop offset="1" stop-color="#c02800"/></radialGradient></defs></svg>
<div class="a" style="left:0;top:406px;width:1024px;height:359px;background:#ebe9ee"></div>
<div class="a" style="left:0;top:765px;width:1024px;height:3px;background:#1a1e28"></div>
<svg class="a" style="left:3px;top:413px" width="9" height="8"><path d="M1.5 1.2L7.2 6.5M7.2 1.2L1.5 6.5" stroke="#000" stroke-width="1.5"/></svg>
<div class="a" style="left:1px;top:425px;width:13px;height:339px;background:#7aace0"></div>
<div class="t" style="left:-20px;top:734px;width:56px;transform:rotate(-90deg);color:#fff;font-size:11px;text-align:center">Terminal</div>
<div class="a" style="left:15px;top:411px;width:1006px;height:332px;background:#fff;border-left:1px solid #a0a0a0;border-top:1px solid #c8c8c8"></div>
<div class="a" style="left:104px;top:414px;width:1px;height:17px;background:#dcdcdc"></div>
<div class="a" style="left:256px;top:414px;width:1px;height:17px;background:#dcdcdc"></div>
<div class="a" style="left:323px;top:414px;width:1px;height:17px;background:#dcdcdc"></div>
<div class="a" style="left:378px;top:414px;width:1px;height:17px;background:#dcdcdc"></div>
<div class="a" style="left:446px;top:414px;width:1px;height:17px;background:#dcdcdc"></div>
<div class="a" style="left:514px;top:414px;width:1px;height:17px;background:#dcdcdc"></div>
<div class="a" style="left:582px;top:414px;width:1px;height:17px;background:#dcdcdc"></div>
<div class="a" style="left:650px;top:414px;width:1px;height:17px;background:#dcdcdc"></div>
<div class="a" style="left:801px;top:414px;width:1px;height:17px;background:#dcdcdc"></div>
<div class="a" style="left:869px;top:414px;width:1px;height:17px;background:#dcdcdc"></div>
<div class="a" style="left:937px;top:414px;width:1px;height:17px;background:#dcdcdc"></div>
<div class="a" style="left:1020px;top:414px;width:1px;height:17px;background:#dcdcdc"></div>
<div class="a" style="left:16px;top:430px;width:1005px;height:2px;background:#d4d4d4;border-bottom:1px solid #c0c0c0"></div>
<div class="t" style="left:22px;top:416px">Order</div><div class="t" style="left:62px;top:416px;color:#666">/</div>
<div class="t r" style="left:104px;width:147px;top:416px">Time</div>
<div class="t r" style="left:256px;width:62px;top:416px">Type</div>
<div class="t r" style="left:323px;width:50px;top:416px">Size</div>
<div class="t r" style="left:378px;width:64px;top:416px">Symbol</div>
<div class="t r" style="left:446px;width:63px;top:416px">Price</div>
<div class="t r" style="left:514px;width:63px;top:416px">S / L</div>
<div class="t r" style="left:582px;width:63px;top:416px">T / P</div>
<div class="t r" style="left:650px;width:149px;top:416px">Time</div>
<div class="t r" style="left:801px;width:63px;top:416px">Price</div>
<div class="t r" style="left:869px;width:63px;top:416px">Swap</div>
<div class="t r" style="left:937px;width:76px;top:416px">Profit</div>
<div class="a" style="left:16px;top:433px;width:1005px;height:20px;background:#fff;border-bottom:1px solid #d0d0d0"></div>
<div class="a" style="left:103px;top:432px;width:1px;height:20px;background:#d0d0d0"></div>
<div class="a" style="left:255px;top:432px;width:1px;height:20px;background:#d0d0d0"></div>
<div class="a" style="left:322px;top:432px;width:1px;height:20px;background:#d0d0d0"></div>
<div class="a" style="left:377px;top:432px;width:1px;height:20px;background:#d0d0d0"></div>
<div class="a" style="left:445px;top:432px;width:1px;height:20px;background:#d0d0d0"></div>
<div class="a" style="left:513px;top:432px;width:1px;height:20px;background:#d0d0d0"></div>
<div class="a" style="left:581px;top:432px;width:1px;height:20px;background:#d0d0d0"></div>
<div class="a" style="left:649px;top:432px;width:1px;height:20px;background:#d0d0d0"></div>
<div class="a" style="left:800px;top:432px;width:1px;height:20px;background:#d0d0d0"></div>
<div class="a" style="left:868px;top:432px;width:1px;height:20px;background:#d0d0d0"></div>
<div class="a" style="left:936px;top:432px;width:1px;height:20px;background:#d0d0d0"></div>
<svg class="a" style="left:18px;top:434px" width="17" height="17"><path d="M1.5 1.5H9L12.5 5V14.5H1.5Z" fill="#f8f8f8" stroke="#555"/><path d="M9 1.5V5H12.5Z" fill="#555" stroke="#555"/><circle cx="11.5" cy="12.6" r="3.5" fill="url(#gr)" stroke="#902000" stroke-width="0.9"/></svg>
<div class="t" style="left:40px;top:436px;color:#000">20312128</div>
<div class="t r" style="left:104px;width:148px;top:436px;color:#000">2010.03.08 03:28</div>
<div class="t r" style="left:256px;width:63px;top:436px;color:#000">sell</div>
<div class="t r" style="left:323px;width:51px;top:436px;color:#000">0.10</div>
<div class="t r" style="left:378px;width:64px;top:436px;color:#000">eurusd</div>
<div class="t r" style="left:446px;width:64px;top:436px;color:#000">1.36827</div>
<div class="t r" style="left:514px;width:64px;top:436px;color:#000">0.00000</div>
<div class="t r" style="left:582px;width:64px;top:436px;color:#000">0.00000</div>
<div class="t r" style="left:650px;width:147px;top:436px;color:#000">2010.03.08 03:40</div>
<div class="t r" style="left:801px;width:64px;top:436px;color:#000">1.36889</div>
<div class="t r" style="left:869px;width:64px;top:436px;color:#000">0.00</div>
<div class="t r" style="left:937px;width:79px;top:436px;color:#000">-6.20</div>
<div class="a" style="left:16px;top:453px;width:1005px;height:20px;background:#ececec;border-bottom:1px solid #d0d0d0"></div>
<div class="a" style="left:103px;top:452px;width:1px;height:20px;background:#d0d0d0"></div>
<div class="a" style="left:255px;top:452px;width:1px;height:20px;background:#d0d0d0"></div>
<div class="a" style="left:322px;top:452px;width:1px;height:20px;background:#d0d0d0"></div>
<div class="a" style="left:377px;top:452px;width:1px;height:20px;background:#d0d0d0"></div>
<div class="a" style="left:445px;top:452px;width:1px;height:20px;background:#d0d0d0"></div>
<div class="a" style="left:513px;top:452px;width:1px;height:20px;background:#d0d0d0"></div>
<div class="a" style="left:581px;top:452px;width:1px;height:20px;background:#d0d0d0"></div>
<div class="a" style="left:649px;top:452px;width:1px;height:20px;background:#d0d0d0"></div>
<div class="a" style="left:800px;top:452px;width:1px;height:20px;background:#d0d0d0"></div>
<div class="a" style="left:868px;top:452px;width:1px;height:20px;background:#d0d0d0"></div>
<div class="a" style="left:936px;top:452px;width:1px;height:20px;background:#d0d0d0"></div>
<svg class="a" style="left:18px;top:454px" width="17" height="17"><path d="M1.5 1.5H9L12.5 5V14.5H1.5Z" fill="#f8f8f8" stroke="#555"/><path d="M9 1.5V5H12.5Z" fill="#555" stroke="#555"/><circle cx="11.5" cy="12.6" r="3.5" fill="url(#gr)" stroke="#902000" stroke-width="0.9"/></svg>
<div class="t" style="left:40px;top:456px;color:#000">20312427</div>
<div class="t r" style="left:104px;width:148px;top:456px;color:#000">2010.03.08 03:48</div>
<div class="t r" style="left:256px;width:63px;top:456px;color:#000">sell</div>
<div class="t r" style="left:323px;width:51px;top:456px;color:#000">0.10</div>
<div class="t r" style="left:378px;width:64px;top:456px;color:#000">eurusd</div>
<div class="t r" style="left:446px;width:64px;top:456px;color:#000">1.36821</div>
<div class="t r" style="left:514px;width:64px;top:456px;color:#000">0.00000</div>
<div class="t r" style="left:582px;width:64px;top:456px;color:#000">0.00000</div>
<div class="t r" style="left:650px;width:147px;top:456px;color:#000">2010.03.08 04:01</div>
<div class="t r" style="left:801px;width:64px;top:456px;color:#000">1.36860</div>
<div class="t r" style="left:869px;width:64px;top:456px;color:#000">0.00</div>
<div class="t r" style="left:937px;width:79px;top:456px;color:#000">-3.90</div>
<div class="a" style="left:16px;top:473px;width:1005px;height:20px;background:#fff;border-bottom:1px solid #d0d0d0"></div>
<div class="a" style="left:103px;top:472px;width:1px;height:20px;background:#d0d0d0"></div>
<div class="a" style="left:255px;top:472px;width:1px;height:20px;background:#d0d0d0"></div>
<div class="a" style="left:322px;top:472px;width:1px;height:20px;background:#d0d0d0"></div>
<div class="a" style="left:377px;top:472px;width:1px;height:20px;background:#d0d0d0"></div>
<div class="a" style="left:445px;top:472px;width:1px;height:20px;background:#d0d0d0"></div>
<div class="a" style="left:513px;top:472px;width:1px;height:20px;background:#d0d0d0"></div>
<div class="a" style="left:581px;top:472px;width:1px;height:20px;background:#d0d0d0"></div>
<div class="a" style="left:649px;top:472px;width:1px;height:20px;background:#d0d0d0"></div>
<div class="a" style="left:800px;top:472px;width:1px;height:20px;background:#d0d0d0"></div>
<div class="a" style="left:868px;top:472px;width:1px;height:20px;background:#d0d0d0"></div>
<div class="a" style="left:936px;top:472px;width:1px;height:20px;background:#d0d0d0"></div>
<svg class="a" style="left:18px;top:474px" width="17" height="17"><path d="M1.5 1.5H9L12.5 5V14.5H1.5Z" fill="#f8f8f8" stroke="#555"/><path d="M9 1.5V5H12.5Z" fill="#555" stroke="#555"/><circle cx="11.5" cy="12.6" r="3.5" fill="url(#gr)" stroke="#902000" stroke-width="0.9"/></svg>
<div class="t" style="left:40px;top:476px;color:#000">20312777</div>
<div class="t r" style="left:104px;width:148px;top:476px;color:#000">2010.03.08 04:22</div>
<div class="t r" style="left:256px;width:63px;top:476px;color:#000">sell</div>
<div class="t r" style="left:323px;width:51px;top:476px;color:#000">0.10</div>
<div class="t r" style="left:378px;width:64px;top:476px;color:#000">eurusd</div>
<div class="t r" style="left:446px;width:64px;top:476px;color:#000">1.36838</div>
<div class="t r" style="left:514px;width:64px;top:476px;color:#000">0.00000</div>
<div class="t r" style="left:582px;width:64px;top:476px;color:#000">0.00000</div>
<div class="t r" style="left:650px;width:147px;top:476px;color:#000">2010.03.08 04:27</div>
<div class="t r" style="left:801px;width:64px;top:476px;color:#000">1.36874</div>
<div class="t r" style="left:869px;width:64px;top:476px;color:#000">0.00</div>
<div class="t r" style="left:937px;width:79px;top:476px;color:#000">-3.60</div>
<div class="a" style="left:16px;top:493px;width:1005px;height:20px;background:#ececec;border-bottom:1px solid #d0d0d0"></div>
<div class="a" style="left:103px;top:492px;width:1px;height:20px;background:#d0d0d0"></div>
<div class="a" style="left:255px;top:492px;width:1px;height:20px;background:#d0d0d0"></div>
<div class="a" style="left:322px;top:492px;width:1px;height:20px;background:#d0d0d0"></div>
<div class="a" style="left:377px;top:492px;width:1px;height:20px;background:#d0d0d0"></div>
<div class="a" style="left:445px;top:492px;width:1px;height:20px;background:#d0d0d0"></div>
<div class="a" style="left:513px;top:492px;width:1px;height:20px;background:#d0d0d0"></div>
<div class="a" style="left:581px;top:492px;width:1px;height:20px;background:#d0d0d0"></div>
<div class="a" style="left:649px;top:492px;width:1px;height:20px;background:#d0d0d0"></div>
<div class="a" style="left:800px;top:492px;width:1px;height:20px;background:#d0d0d0"></div>
<div class="a" style="left:868px;top:492px;width:1px;height:20px;background:#d0d0d0"></div>
<div class="a" style="left:936px;top:492px;width:1px;height:20px;background:#d0d0d0"></div>
<svg class="a" style="left:18px;top:494px" width="17" height="17"><path d="M1.5 1.5H9L12.5 5V14.5H1.5Z" fill="#f8f8f8" stroke="#555"/><path d="M9 1.5V5H12.5Z" fill="#555" stroke="#555"/><circle cx="11.5" cy="12.6" r="3.5" fill="url(#gr)" stroke="#902000" stroke-width="0.9"/></svg>
<div class="t" style="left:40px;top:496px;color:#000">20312876</div>
<div class="t r" style="left:104px;width:148px;top:496px;color:#000">2010.03.08 04:32</div>
<div class="t r" style="left:256px;width:63px;top:496px;color:#000">sell</div>
<div class="t r" style="left:323px;width:51px;top:496px;color:#000">0.10</div>
<div class="t r" style="left:378px;width:64px;top:496px;color:#000">eurusd</div>
<div class="t r" style="left:446px;width:64px;top:496px;color:#000">1.36823</div>
<div class="t r" style="left:514px;width:64px;top:496px;color:#000">0.00000</div>
<div class="t r" style="left:582px;width:64px;top:496px;color:#000">0.00000</div>
<div class="t r" style="left:650px;width:147px;top:496px;color:#000">2010.03.08 05:21</div>
<div class="t r" style="left:801px;width:64px;top:496px;color:#000">1.36873</div>
<div class="t r" style="left:869px;width:64px;top:496px;color:#000">0.00</div>
<div class="t r" style="left:937px;width:79px;top:496px;color:#000">-5.00</div>
<div class="a" style="left:16px;top:513px;width:1005px;height:20px;background:#fff;border-bottom:1px solid #d0d0d0"></div>
<div class="a" style="left:103px;top:512px;width:1px;height:20px;background:#d0d0d0"></div>
<div class="a" style="left:255px;top:512px;width:1px;height:20px;background:#d0d0d0"></div>
<div class="a" style="left:322px;top:512px;width:1px;height:20px;background:#d0d0d0"></div>
<div class="a" style="left:377px;top:512px;width:1px;height:20px;background:#d0d0d0"></div>
<div class="a" style="left:445px;top:512px;width:1px;height:20px;background:#d0d0d0"></div>
<div class="a" style="left:513px;top:512px;width:1px;height:20px;background:#d0d0d0"></div>
<div class="a" style="left:581px;top:512px;width:1px;height:20px;background:#d0d0d0"></div>
<div class="a" style="left:649px;top:512px;width:1px;height:20px;background:#d0d0d0"></div>
<div class="a" style="left:800px;top:512px;width:1px;height:20px;background:#d0d0d0"></div>
<div class="a" style="left:868px;top:512px;width:1px;height:20px;background:#d0d0d0"></div>
<div class="a" style="left:936px;top:512px;width:1px;height:20px;background:#d0d0d0"></div>
<svg class="a" style="left:18px;top:514px" width="17" height="17"><path d="M1.5 1.5H9L12.5 5V14.5H1.5Z" fill="#f8f8f8" stroke="#555"/><path d="M9 1.5V5H12.5Z" fill="#555" stroke="#555"/><circle cx="11.5" cy="12.6" r="3.5" fill="url(#gr)" stroke="#902000" stroke-width="0.9"/></svg>
<div class="t" style="left:40px;top:516px;color:#000">20313508</div>
<div class="t r" style="left:104px;width:148px;top:516px;color:#000">2010.03.08 05:37</div>
<div class="t r" style="left:256px;width:63px;top:516px;color:#000">sell</div>
<div class="t r" style="left:323px;width:51px;top:516px;color:#000">0.10</div>
<div class="t r" style="left:378px;width:64px;top:516px;color:#000">eurusd</div>
<div class="t r" style="left:446px;width:64px;top:516px;color:#000">1.36838</div>
<div class="t r" style="left:514px;width:64px;top:516px;color:#000">1.36818</div>
<div class="t r" style="left:582px;width:64px;top:516px;color:#000">1.36428</div>
<div class="t r" style="left:650px;width:147px;top:516px;color:#000">2010.03.08 07:31</div>
<div class="t r" style="left:801px;width:64px;top:516px;color:#000">1.36738</div>
<div class="t r" style="left:869px;width:64px;top:516px;color:#000">0.00</div>
<div class="t r" style="left:937px;width:79px;top:516px;color:#000">10.00</div>
<div class="a" style="left:16px;top:533px;width:1005px;height:20px;background:#ececec;border-bottom:1px solid #d0d0d0"></div>
<div class="a" style="left:515px;top:533px;width:65px;height:19px;background:#ffa8a8"></div>
<div class="a" style="left:103px;top:532px;width:1px;height:20px;background:#d0d0d0"></div>
<div class="a" style="left:255px;top:532px;width:1px;height:20px;background:#d0d0d0"></div>
<div class="a" style="left:322px;top:532px;width:1px;height:20px;background:#d0d0d0"></div>
<div class="a" style="left:377px;top:532px;width:1px;height:20px;background:#d0d0d0"></div>
<div class="a" style="left:445px;top:532px;width:1px;height:20px;background:#d0d0d0"></div>
<div class="a" style="left:513px;top:532px;width:1px;height:20px;background:#d0d0d0"></div>
<div class="a" style="left:581px;top:532px;width:1px;height:20px;background:#d0d0d0"></div>
<div class="a" style="left:649px;top:532px;width:1px;height:20px;background:#d0d0d0"></div>
<div class="a" style="left:800px;top:532px;width:1px;height:20px;background:#d0d0d0"></div>
<div class="a" style="left:868px;top:532px;width:1px;height:20px;background:#d0d0d0"></div>
<div class="a" style="left:936px;top:532px;width:1px;height:20px;background:#d0d0d0"></div>
<svg class="a" style="left:18px;top:534px" width="17" height="17"><path d="M1.5 1.5H9L12.5 5V14.5H1.5Z" fill="#f8f8f8" stroke="#555"/><path d="M9 1.5V5H12.5Z" fill="#555" stroke="#555"/><circle cx="11.5" cy="12.6" r="3.5" fill="url(#gb)" stroke="#10407a" stroke-width="0.9"/></svg>
<div class="t" style="left:40px;top:536px;color:#000">20314907</div>
<div class="t r" style="left:104px;width:148px;top:536px;color:#000">2010.03.08 07:32</div>
<div class="t r" style="left:256px;width:63px;top:536px;color:#000">buy</div>
<div class="t r" style="left:323px;width:51px;top:536px;color:#000">0.10</div>
<div class="t r" style="left:378px;width:64px;top:536px;color:#000">eurusd</div>
<div class="t r" style="left:446px;width:64px;top:536px;color:#000">1.36754</div>
<div class="t r" style="left:514px;width:64px;top:536px;color:#000">1.36764</div>
<div class="t r" style="left:582px;width:64px;top:536px;color:#000">1.36958</div>
<div class="t r" style="left:650px;width:147px;top:536px;color:#000">2010.03.08 07:43</div>
<div class="t r" style="left:801px;width:64px;top:536px;color:#000">1.36764</div>
<div class="t r" style="left:869px;width:64px;top:536px;color:#000">0.00</div>
<div class="t r" style="left:937px;width:79px;top:536px;color:#000">1.00</div>
<div class="a" style="left:16px;top:553px;width:1005px;height:20px;background:#fff;border-bottom:1px solid #d0d0d0"></div>
<div class="a" style="left:103px;top:552px;width:1px;height:20px;background:#d0d0d0"></div>
<div class="a" style="left:255px;top:552px;width:1px;height:20px;background:#d0d0d0"></div>
<div class="a" style="left:322px;top:552px;width:1px;height:20px;background:#d0d0d0"></div>
<div class="a" style="left:377px;top:552px;width:1px;height:20px;background:#d0d0d0"></div>
<div class="a" style="left:445px;top:552px;width:1px;height:20px;background:#d0d0d0"></div>
<div class="a" style="left:513px;top:552px;width:1px;height:20px;background:#d0d0d0"></div>
<div class="a" style="left:581px;top:552px;width:1px;height:20px;background:#d0d0d0"></div>
<div class="a" style="left:649px;top:552px;width:1px;height:20px;background:#d0d0d0"></div>
<div class="a" style="left:800px;top:552px;width:1px;height:20px;background:#d0d0d0"></div>
<div class="a" style="left:868px;top:552px;width:1px;height:20px;background:#d0d0d0"></div>
<div class="a" style="left:936px;top:552px;width:1px;height:20px;background:#d0d0d0"></div>
<svg class="a" style="left:18px;top:554px" width="17" height="17"><path d="M1.5 1.5H9L12.5 5V14.5H1.5Z" fill="#f8f8f8" stroke="#555"/><path d="M9 1.5V5H12.5Z" fill="#555" stroke="#555"/><circle cx="11.5" cy="12.6" r="3.5" fill="url(#gb)" stroke="#10407a" stroke-width="0.9"/></svg>
<div class="t" style="left:40px;top:556px;color:#000">20315543</div>
<div class="t r" style="left:104px;width:148px;top:556px;color:#000">2010.03.08 08:01</div>
<div class="t r" style="left:256px;width:63px;top:556px;color:#000">buy</div>
<div class="t r" style="left:323px;width:51px;top:556px;color:#000">0.10</div>
<div class="t r" style="left:378px;width:64px;top:556px;color:#000">eurusd</div>
<div class="t r" style="left:446px;width:64px;top:556px;color:#000">1.36803</div>
<div class="t r" style="left:514px;width:64px;top:556px;color:#000">1.36833</div>
<div class="t r" style="left:582px;width:64px;top:556px;color:#000">1.37203</div>
<div class="t r" style="left:650px;width:147px;top:556px;color:#000">2010.03.08 08:15</div>
<div class="t r" style="left:801px;width:64px;top:556px;color:#000">1.36911</div>
<div class="t r" style="left:869px;width:64px;top:556px;color:#000">0.00</div>
<div class="t r" style="left:937px;width:79px;top:556px;color:#000">10.80</div>
<div class="a" style="left:16px;top:573px;width:1005px;height:20px;background:#ececec;border-bottom:1px solid #d0d0d0"></div>
<div class="a" style="left:103px;top:572px;width:1px;height:20px;background:#d0d0d0"></div>
<div class="a" style="left:255px;top:572px;width:1px;height:20px;background:#d0d0d0"></div>
<div class="a" style="left:322px;top:572px;width:1px;height:20px;background:#d0d0d0"></div>
<div class="a" style="left:377px;top:572px;width:1px;height:20px;background:#d0d0d0"></div>
<div class="a" style="left:445px;top:572px;width:1px;height:20px;background:#d0d0d0"></div>
<div class="a" style="left:513px;top:572px;width:1px;height:20px;background:#d0d0d0"></div>
<div class="a" style="left:581px;top:572px;width:1px;height:20px;background:#d0d0d0"></div>
<div class="a" style="left:649px;top:572px;width:1px;height:20px;background:#d0d0d0"></div>
<div class="a" style="left:800px;top:572px;width:1px;height:20px;background:#d0d0d0"></div>
<div class="a" style="left:868px;top:572px;width:1px;height:20px;background:#d0d0d0"></div>
<div class="a" style="left:936px;top:572px;width:1px;height:20px;background:#d0d0d0"></div>
<svg class="a" style="left:18px;top:574px" width="17" height="17"><path d="M1.5 1.5H9L12.5 5V14.5H1.5Z" fill="#f8f8f8" stroke="#555"/><path d="M9 1.5V5H12.5Z" fill="#555" stroke="#555"/><circle cx="11.5" cy="12.6" r="3.5" fill="url(#gr)" stroke="#902000" stroke-width="0.9"/></svg>
<div class="t" style="left:40px;top:576px;color:#000">20316191</div>
<div class="t r" style="left:104px;width:148px;top:576px;color:#000">2010.03.08 08:20</div>
<div class="t r" style="left:256px;width:63px;top:576px;color:#000">sell</div>
<div class="t r" style="left:323px;width:51px;top:576px;color:#000">0.10</div>
<div class="t r" style="left:378px;width:64px;top:576px;color:#000">eurusd</div>
<div class="t r" style="left:446px;width:64px;top:576px;color:#000">1.36887</div>
<div class="t r" style="left:514px;width:64px;top:576px;color:#000">0.00000</div>
<div class="t r" style="left:582px;width:64px;top:576px;color:#000">0.00000</div>
<div class="t r" style="left:650px;width:147px;top:576px;color:#000">2010.03.08 08:22</div>
<div class="t r" style="left:801px;width:64px;top:576px;color:#000">1.36922</div>
<div class="t r" style="left:869px;width:64px;top:576px;color:#000">0.00</div>
<div class="t r" style="left:937px;width:79px;top:576px;color:#000">-3.50</div>
<div class="a" style="left:16px;top:593px;width:1005px;height:20px;background:#fff;border-bottom:1px solid #d0d0d0"></div>
<div class="a" style="left:515px;top:593px;width:65px;height:19px;background:#ffa8a8"></div>
<div class="a" style="left:103px;top:592px;width:1px;height:20px;background:#d0d0d0"></div>
<div class="a" style="left:255px;top:592px;width:1px;height:20px;background:#d0d0d0"></div>
<div class="a" style="left:322px;top:592px;width:1px;height:20px;background:#d0d0d0"></div>
<div class="a" style="left:377px;top:592px;width:1px;height:20px;background:#d0d0d0"></div>
<div class="a" style="left:445px;top:592px;width:1px;height:20px;background:#d0d0d0"></div>
<div class="a" style="left:513px;top:592px;width:1px;height:20px;background:#d0d0d0"></div>
<div class="a" style="left:581px;top:592px;width:1px;height:20px;background:#d0d0d0"></div>
<div class="a" style="left:649px;top:592px;width:1px;height:20px;background:#d0d0d0"></div>
<div class="a" style="left:800px;top:592px;width:1px;height:20px;background:#d0d0d0"></div>
<div class="a" style="left:868px;top:592px;width:1px;height:20px;background:#d0d0d0"></div>
<div class="a" style="left:936px;top:592px;width:1px;height:20px;background:#d0d0d0"></div>
<svg class="a" style="left:18px;top:594px" width="17" height="17"><path d="M1.5 1.5H9L12.5 5V14.5H1.5Z" fill="#f8f8f8" stroke="#555"/><path d="M9 1.5V5H12.5Z" fill="#555" stroke="#555"/><circle cx="11.5" cy="12.6" r="3.5" fill="url(#gr)" stroke="#902000" stroke-width="0.9"/></svg>
<div class="t" style="left:40px;top:596px;color:#000">20316261</div>
<div class="t r" style="left:104px;width:148px;top:596px;color:#000">2010.03.08 08:24</div>
<div class="t r" style="left:256px;width:63px;top:596px;color:#000">sell</div>
<div class="t r" style="left:323px;width:51px;top:596px;color:#000">0.10</div>
<div class="t r" style="left:378px;width:64px;top:596px;color:#000">eurusd</div>
<div class="t r" style="left:446px;width:64px;top:596px;color:#000">1.36880</div>
<div class="t r" style="left:514px;width:64px;top:596px;color:#000">1.36872</div>
<div class="t r" style="left:582px;width:64px;top:596px;color:#000">0.00000</div>
<div class="t r" style="left:650px;width:147px;top:596px;color:#000">2010.03.08 08:33</div>
<div class="t r" style="left:801px;width:64px;top:596px;color:#000">1.36872</div>
<div class="t r" style="left:869px;width:64px;top:596px;color:#000">0.00</div>
<div class="t r" style="left:937px;width:79px;top:596px;color:#000">0.80</div>
<div class="a" style="left:16px;top:613px;width:1005px;height:20px;background:#ececec;border-bottom:1px solid #d0d0d0"></div>
<div class="a" style="left:515px;top:613px;width:65px;height:19px;background:#ffa8a8"></div>
<div class="a" style="left:103px;top:612px;width:1px;height:20px;background:#d0d0d0"></div>
<div class="a" style="left:255px;top:612px;width:1px;height:20px;background:#d0d0d0"></div>
<div class="a" style="left:322px;top:612px;width:1px;height:20px;background:#d0d0d0"></div>
<div class="a" style="left:377px;top:612px;width:1px;height:20px;background:#d0d0d0"></div>
<div class="a" style="left:445px;top:612px;width:1px;height:20px;background:#d0d0d0"></div>
<div class="a" style="left:513px;top:612px;width:1px;height:20px;background:#d0d0d0"></div>
<div class="a" style="left:581px;top:612px;width:1px;height:20px;background:#d0d0d0"></div>
<div class="a" style="left:649px;top:612px;width:1px;height:20px;background:#d0d0d0"></div>
<div class="a" style="left:800px;top:612px;width:1px;height:20px;background:#d0d0d0"></div>
<div class="a" style="left:868px;top:612px;width:1px;height:20px;background:#d0d0d0"></div>
<div class="a" style="left:936px;top:612px;width:1px;height:20px;background:#d0d0d0"></div>
<svg class="a" style="left:18px;top:614px" width="17" height="17"><path d="M1.5 1.5H9L12.5 5V14.5H1.5Z" fill="#f8f8f8" stroke="#555"/><path d="M9 1.5V5H12.5Z" fill="#555" stroke="#555"/><circle cx="11.5" cy="12.6" r="3.5" fill="url(#gr)" stroke="#902000" stroke-width="0.9"/></svg>
<div class="t" style="left:40px;top:616px;color:#000">20317167</div>
<div class="t r" style="left:104px;width:148px;top:616px;color:#000">2010.03.08 08:50</div>
<div class="t r" style="left:256px;width:63px;top:616px;color:#000">sell</div>
<div class="t r" style="left:323px;width:51px;top:616px;color:#000">0.10</div>
<div class="t r" style="left:378px;width:64px;top:616px;color:#000">eurusd</div>
<div class="t r" style="left:446px;width:64px;top:616px;color:#000">1.36907</div>
<div class="t r" style="left:514px;width:64px;top:616px;color:#000">1.36914</div>
<div class="t r" style="left:582px;width:64px;top:616px;color:#000">0.00000</div>
<div class="t r" style="left:650px;width:147px;top:616px;color:#000">2010.03.08 08:51</div>
<div class="t r" style="left:801px;width:64px;top:616px;color:#000">1.36914</div>
<div class="t r" style="left:869px;width:64px;top:616px;color:#000">0.00</div>
<div class="t r" style="left:937px;width:79px;top:616px;color:#000">-0.70</div>
<div class="a" style="left:16px;top:633px;width:1005px;height:20px;background:#fff;border-bottom:1px solid #d0d0d0"></div>
<div class="a" style="left:515px;top:633px;width:65px;height:19px;background:#ffa8a8"></div>
<div class="a" style="left:103px;top:632px;width:1px;height:20px;background:#d0d0d0"></div>
<div class="a" style="left:255px;top:632px;width:1px;height:20px;background:#d0d0d0"></div>
<div class="a" style="left:322px;top:632px;width:1px;height:20px;background:#d0d0d0"></div>
<div class="a" style="left:377px;top:632px;width:1px;height:20px;background:#d0d0d0"></div>
<div class="a" style="left:445px;top:632px;width:1px;height:20px;background:#d0d0d0"></div>
<div class="a" style="left:513px;top:632px;width:1px;height:20px;background:#d0d0d0"></div>
<div class="a" style="left:581px;top:632px;width:1px;height:20px;background:#d0d0d0"></div>
<div class="a" style="left:649px;top:632px;width:1px;height:20px;background:#d0d0d0"></div>
<div class="a" style="left:800px;top:632px;width:1px;height:20px;background:#d0d0d0"></div>
<div class="a" style="left:868px;top:632px;width:1px;height:20px;background:#d0d0d0"></div>
<div class="a" style="left:936px;top:632px;width:1px;height:20px;background:#d0d0d0"></div>
<svg class="a" style="left:18px;top:634px" width="17" height="17"><path d="M1.5 1.5H9L12.5 5V14.5H1.5Z" fill="#f8f8f8" stroke="#555"/><path d="M9 1.5V5H12.5Z" fill="#555" stroke="#555"/><circle cx="11.5" cy="12.6" r="3.5" fill="url(#gr)" stroke="#902000" stroke-width="0.9"/></svg>
<div class="t" style="left:40px;top:636px;color:#000">20317262</div>
<div class="t r" style="left:104px;width:148px;top:636px;color:#000">2010.03.08 08:54</div>
<div class="t r" style="left:256px;width:63px;top:636px;color:#000">sell</div>
<div class="t r" style="left:323px;width:51px;top:636px;color:#000">0.10</div>
<div class="t r" style="left:378px;width:64px;top:636px;color:#000">eurusd</div>
<div class="t r" style="left:446px;width:64px;top:636px;color:#000">1.36892</div>
<div class="t r" style="left:514px;width:64px;top:636px;color:#000">1.36893</div>
<div class="t r" style="left:582px;width:64px;top:636px;color:#000">0.00000</div>
<div class="t r" style="left:650px;width:147px;top:636px;color:#000">2010.03.08 08:55</div>
<div class="t r" style="left:801px;width:64px;top:636px;color:#000">1.36893</div>
<div class="t r" style="left:869px;width:64px;top:636px;color:#000">0.00</div>
<div class="t r" style="left:937px;width:79px;top:636px;color:#000">-0.10</div>
<div class="a" style="left:16px;top:653px;width:1005px;height:20px;background:#ececec;border-bottom:1px solid #d0d0d0"></div>
<div class="a" style="left:515px;top:653px;width:65px;height:19px;background:#ffa8a8"></div>
<div class="a" style="left:103px;top:652px;width:1px;height:20px;background:#d0d0d0"></div>
<div class="a" style="left:255px;top:652px;width:1px;height:20px;background:#d0d0d0"></div>
<div class="a" style="left:322px;top:652px;width:1px;height:20px;background:#d0d0d0"></div>
<div class="a" style="left:377px;top:652px;width:1px;height:20px;background:#d0d0d0"></div>
<div class="a" style="left:445px;top:652px;width:1px;height:20px;background:#d0d0d0"></div>
<div class="a" style="left:513px;top:652px;width:1px;height:20px;background:#d0d0d0"></div>
<div class="a" style="left:581px;top:652px;width:1px;height:20px;background:#d0d0d0"></div>
<div class="a" style="left:649px;top:652px;width:1px;height:20px;background:#d0d0d0"></div>
<div class="a" style="left:800px;top:652px;width:1px;height:20px;background:#d0d0d0"></div>
<div class="a" style="left:868px;top:652px;width:1px;height:20px;background:#d0d0d0"></div>
<div class="a" style="left:936px;top:652px;width:1px;height:20px;background:#d0d0d0"></div>
<svg class="a" style="left:18px;top:654px" width="17" height="17"><path d="M1.5 1.5H9L12.5 5V14.5H1.5Z" fill="#f8f8f8" stroke="#555"/><path d="M9 1.5V5H12.5Z" fill="#555" stroke="#555"/><circle cx="11.5" cy="12.6" r="3.5" fill="url(#gr)" stroke="#902000" stroke-width="0.9"/></svg>
<div class="t" style="left:40px;top:656px;color:#000">20317320</div>
<div class="t r" style="left:104px;width:148px;top:656px;color:#000">2010.03.08 08:56</div>
<div class="t r" style="left:256px;width:63px;top:656px;color:#000">sell</div>
<div class="t r" style="left:323px;width:51px;top:656px;color:#000">0.10</div>
<div class="t r" style="left:378px;width:64px;top:656px;color:#000">eurusd</div>
<div class="t r" style="left:446px;width:64px;top:656px;color:#000">1.36872</div>
<div class="t r" style="left:514px;width:64px;top:656px;color:#000">1.36870</div>
<div class="t r" style="left:582px;width:64px;top:656px;color:#000">0.00000</div>
<div class="t r" style="left:650px;width:147px;top:656px;color:#000">2010.03.08 08:58</div>
<div class="t r" style="left:801px;width:64px;top:656px;color:#000">1.36870</div>
<div class="t r" style="left:869px;width:64px;top:656px;color:#000">0.00</div>
<div class="t r" style="left:937px;width:79px;top:656px;color:#000">0.20</div>
<div class="a" style="left:16px;top:673px;width:1005px;height:20px;background:#fff;border-bottom:1px solid #d0d0d0"></div>
<div class="a" style="left:515px;top:673px;width:65px;height:19px;background:#ffa8a8"></div>
<div class="a" style="left:103px;top:672px;width:1px;height:20px;background:#d0d0d0"></div>
<div class="a" style="left:255px;top:672px;width:1px;height:20px;background:#d0d0d0"></div>
<div class="a" style="left:322px;top:672px;width:1px;height:20px;background:#d0d0d0"></div>
<div class="a" style="left:377px;top:672px;width:1px;height:20px;background:#d0d0d0"></div>
<div class="a" style="left:445px;top:672px;width:1px;height:20px;background:#d0d0d0"></div>
<div class="a" style="left:513px;top:672px;width:1px;height:20px;background:#d0d0d0"></div>
<div class="a" style="left:581px;top:672px;width:1px;height:20px;background:#d0d0d0"></div>
<div class="a" style="left:649px;top:672px;width:1px;height:20px;background:#d0d0d0"></div>
<div class="a" style="left:800px;top:672px;width:1px;height:20px;background:#d0d0d0"></div>
<div class="a" style="left:868px;top:672px;width:1px;height:20px;background:#d0d0d0"></div>
<div class="a" style="left:936px;top:672px;width:1px;height:20px;background:#d0d0d0"></div>
<svg class="a" style="left:18px;top:674px" width="17" height="17"><path d="M1.5 1.5H9L12.5 5V14.5H1.5Z" fill="#f8f8f8" stroke="#555"/><path d="M9 1.5V5H12.5Z" fill="#555" stroke="#555"/><circle cx="11.5" cy="12.6" r="3.5" fill="url(#gr)" stroke="#902000" stroke-width="0.9"/></svg>
<div class="t" style="left:40px;top:676px;color:#000">20317412</div>
<div class="t r" style="left:104px;width:148px;top:676px;color:#000">2010.03.08 09:00</div>
<div class="t r" style="left:256px;width:63px;top:676px;color:#000">sell</div>
<div class="t r" style="left:323px;width:51px;top:676px;color:#000">0.10</div>
<div class="t r" style="left:378px;width:64px;top:676px;color:#000">eurusd</div>
<div class="t r" style="left:446px;width:64px;top:676px;color:#000">1.36836</div>
<div class="t r" style="left:514px;width:64px;top:676px;color:#000">1.36862</div>
<div class="t r" style="left:582px;width:64px;top:676px;color:#000">0.00000</div>
<div class="t r" style="left:650px;width:147px;top:676px;color:#000">2010.03.08 09:03</div>
<div class="t r" style="left:801px;width:64px;top:676px;color:#000">1.36862</div>
<div class="t r" style="left:869px;width:64px;top:676px;color:#000">0.00</div>
<div class="t r" style="left:937px;width:79px;top:676px;color:#000">-2.60</div>
<div class="a" style="left:16px;top:692px;width:1005px;height:20px;background:#5b7fbf"></div>
<div class="a" style="left:103px;top:692px;width:1px;height:20px;background:#c4c8d4"></div>
<div class="a" style="left:255px;top:692px;width:1px;height:20px;background:#c4c8d4"></div>
<div class="a" style="left:322px;top:692px;width:1px;height:20px;background:#c4c8d4"></div>
<div class="a" style="left:377px;top:692px;width:1px;height:20px;background:#c4c8d4"></div>
<div class="a" style="left:445px;top:692px;width:1px;height:20px;background:#c4c8d4"></div>
<div class="a" style="left:513px;top:692px;width:1px;height:20px;background:#c4c8d4"></div>
<div class="a" style="left:581px;top:692px;width:1px;height:20px;background:#c4c8d4"></div>
<div class="a" style="left:649px;top:692px;width:1px;height:20px;background:#c4c8d4"></div>
<div class="a" style="left:800px;top:692px;width:1px;height:20px;background:#c4c8d4"></div>
<div class="a" style="left:868px;top:692px;width:1px;height:20px;background:#c4c8d4"></div>
<div class="a" style="left:936px;top:692px;width:1px;height:20px;background:#c4c8d4"></div>
<svg class="a" style="left:18px;top:694px" width="17" height="17"><path d="M1.5 1.5H9L12.5 5V14.5H1.5Z" fill="#f8f8f8" stroke="#555"/><path d="M9 1.5V5H12.5Z" fill="#555" stroke="#555"/><circle cx="11.5" cy="12.6" r="3.5" fill="url(#gr)" stroke="#902000" stroke-width="0.9"/></svg>
<div class="t" style="left:40px;top:696px;color:#fff">20317529</div>
<div class="t r" style="left:104px;width:148px;top:696px;color:#fff">2010.03.08 09:04</div>
<div class="t r" style="left:256px;width:63px;top:696px;color:#fff">sell</div>
<div class="t r" style="left:323px;width:51px;top:696px;color:#fff">0.10</div>
<div class="t r" style="left:378px;width:64px;top:696px;color:#fff">eurusd</div>
<div class="t r" style="left:446px;width:64px;top:696px;color:#fff">1.36826</div>
<div class="t r" style="left:514px;width:64px;top:696px;color:#fff">1.36800</div>
<div class="t r" style="left:582px;width:64px;top:696px;color:#fff">1.36563</div>
<div class="t r" style="left:650px;width:147px;top:696px;color:#fff">2010.03.08 09:22</div>
<div class="t r" style="left:801px;width:64px;top:696px;color:#fff">1.36723</div>
<div class="t r" style="left:869px;width:64px;top:696px;color:#fff">0.00</div>
<div class="t r" style="left:937px;width:79px;top:696px;color:#fff">10.30</div>
<div class="a" style="left:16px;top:712px;width:1005px;height:20px;background:#c8c8c8"></div>
<svg class="a" style="left:21px;top:715px" width="12" height="12"><defs><radialGradient id="sg" cx="0.4" cy="0.35" r="0.7"><stop offset="0" stop-color="#f4f4f4"/><stop offset="1" stop-color="#909090"/></radialGradient></defs><circle cx="6" cy="6.5" r="4" fill="url(#sg)" stroke="#8a8a8a"/></svg>
<div class="t" style="left:40.5px;top:716px;font-weight:bold;font-size:11.5px">Profit/Loss: 7.50</div>
<div class="t" style="left:138.5px;top:716px;font-weight:bold;font-size:11.5px">Credit: 0.00</div>
<div class="t" style="left:208.5px;top:716px;font-weight:bold;font-size:11.5px">Deposit: 0.00</div>
<div class="t" style="left:288px;top:716px;font-weight:bold;font-size:11.5px">Withdrawal: 0.00</div>
<div class="t r" style="left:900px;width:116px;top:716px;font-weight:bold;font-size:11.5px">7.50</div>
<div class="a" style="left:16px;top:743px;width:1005px;height:1px;background:#000"></div>
<div class="a" style="left:67px;top:743px;width:95px;height:18px;background:#fff;border:1px solid #000;border-top:none;border-right-width:2px;border-bottom-width:2px"></div>
<div class="t" style="left:28px;top:747px;color:#888">Trade</div>
<div class="t" style="left:76px;top:746px">Account History</div>
<div class="t" style="left:172px;top:747px;color:#8a8a8a;letter-spacing:-0.2px">News</div>
<div class="a" style="left:208px;top:746px;width:1px;height:13px;background:#808080"></div>
<div class="t" style="left:218px;top:747px;color:#8a8a8a;letter-spacing:-0.2px">Alerts</div>
<div class="a" style="left:256px;top:746px;width:1px;height:13px;background:#808080"></div>
<div class="t" style="left:265.5px;top:747px;color:#8a8a8a;letter-spacing:-0.2px">Mailbox</div>
<div class="a" style="left:312px;top:746px;width:1px;height:13px;background:#808080"></div>
<div class="t" style="left:321px;top:747px;color:#8a8a8a;letter-spacing:-0.2px">Experts</div>
<div class="a" style="left:369px;top:746px;width:1px;height:13px;background:#808080"></div>
<div class="t" style="left:379px;top:747px;color:#8a8a8a;letter-spacing:-0.2px">Journal</div>
<div class="a" style="left:424px;top:746px;width:1px;height:13px;background:#808080"></div>
<svg class="a" style="left:547px;top:511px" width="14" height="21"><path d="M0.5 0.5V16.5L4.5 12.5L7.5 19L10 18L7 11.5H11.5Z" fill="#fff" stroke="#000" stroke-linejoin="miter"/></svg>
</body></html>
